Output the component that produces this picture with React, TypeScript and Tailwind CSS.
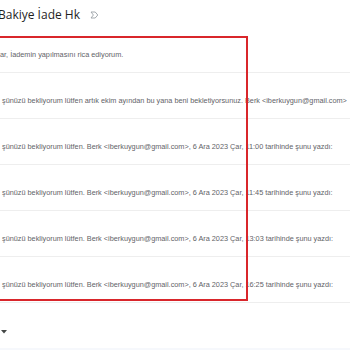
import React from "react";

const rows = [
  "şünüzü bekliyorum lütfen artık ekim ayından bu yana beni bekletiyorsunuz. Berk <iberkuygun@gmail.com>",
  "şünüzü bekliyorum lütfen. Berk <iberkuygun@gmail.com>, 6 Ara 2023 Çar, 11:00 tarihinde şunu yazdı:",
  "şünüzü bekliyorum lütfen. Berk <iberkuygun@gmail.com>, 6 Ara 2023 Çar, 11:45 tarihinde şunu yazdı:",
  "şünüzü bekliyorum lütfen. Berk <iberkuygun@gmail.com>, 6 Ara 2023 Çar, 13:03 tarihinde şunu yazdı:",
  "şünüzü bekliyorum lütfen. Berk <iberkuygun@gmail.com>, 6 Ara 2023 Çar, 16:25 tarihinde şunu yazdı:",
];

function ImportantIcon() {
  return (
    <svg width="9" height="8" viewBox="0 0 9 8" fill="none">
      <path d="M1 1h4.2L7.8 4 5.2 7H1l2.4-3z" stroke="#9aa0a6" strokeWidth="0.9" strokeLinejoin="round" />
    </svg>
  );
}

export default function App() {
  return (
    <div className="relative w-[350px] h-[350px] overflow-hidden bg-white font-['Liberation_Sans',Arial,sans-serif]">
      <div className="h-[37px] flex items-start pt-[6px] -ml-[2px]">
        <span className="text-[12px] leading-[18px] text-[#1f1f1f] font-['Open_Sans',sans-serif]">Bakiye İade Hk</span>
        <span className="ml-[10px] mt-[5px]">
          <ImportantIcon />
        </span>
      </div>

      <div className="h-[36px] flex items-center pt-[2px] border-b border-[#eeeeee] text-[7.3px] text-[#5f6368] whitespace-nowrap">
        ar, İademin yapılmasını rica ediyorum.
      </div>

      {rows.map((t, i) => (
        <div
          key={i}
          className="h-[46px] flex items-end pb-[11px] border-b border-[#eeeeee] text-[7.3px] text-[#5f6368] whitespace-nowrap"
        >
          <span className="pl-[2px]">{t}</span>
        </div>
      ))}

      <div className="h-[45px] flex items-center pl-[1px] pt-[12px]">
        <svg width="6" height="4" viewBox="0 0 6 4">
          <path d="M0 0h6L3 3.5z" fill="#444746" />
        </svg>
      </div>
      <div className="h-[10px] bg-[#f6f8fc]" />

      <div className="absolute left-[-4px] top-[36px] w-[252px] h-[265px] border-2 border-[#d9262b]" />
    </div>
  );
}
